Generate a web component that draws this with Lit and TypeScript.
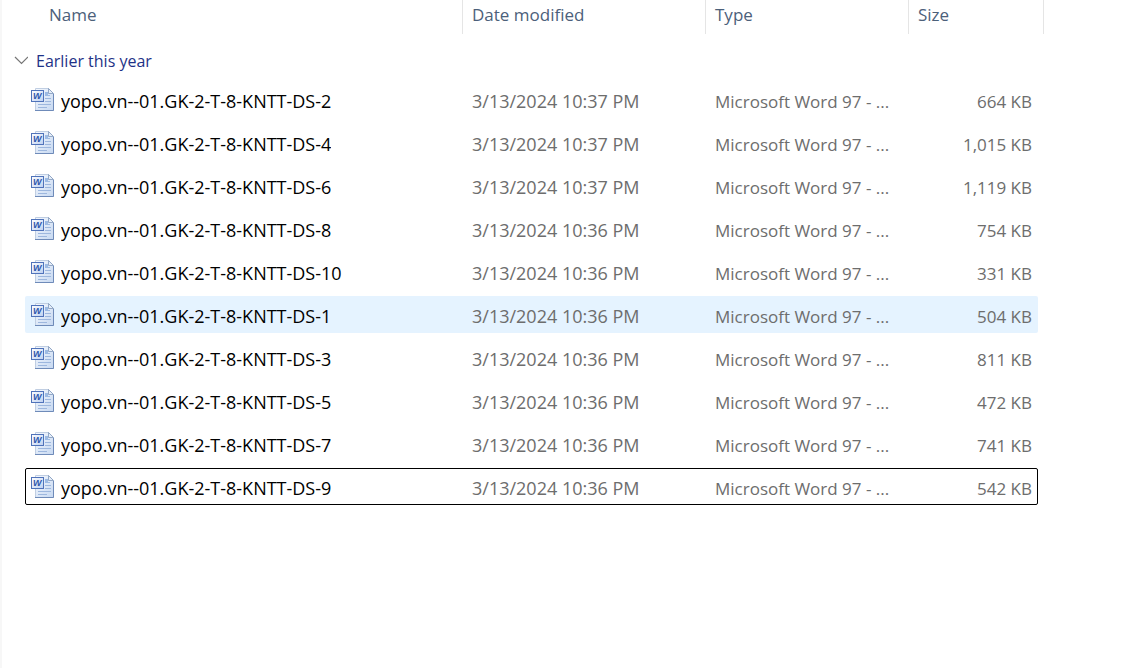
import { LitElement, html, css } from "lit";
import { customElement, state } from "lit/decorators.js";
import { classMap } from "lit/directives/class-map.js";

interface FileRow {
  name: string;
  modified: string;
  size: string;
  state?: "hover" | "focus";
}

const TYPE = "Microsoft Word 97 - ...";

const FILES: FileRow[] = [
  { name: "yopo.vn--01.GK-2-T-8-KNTT-DS-2", modified: "3/13/2024 10:37 PM", size: "664 KB" },
  { name: "yopo.vn--01.GK-2-T-8-KNTT-DS-4", modified: "3/13/2024 10:37 PM", size: "1,015 KB" },
  { name: "yopo.vn--01.GK-2-T-8-KNTT-DS-6", modified: "3/13/2024 10:37 PM", size: "1,119 KB" },
  { name: "yopo.vn--01.GK-2-T-8-KNTT-DS-8", modified: "3/13/2024 10:36 PM", size: "754 KB" },
  { name: "yopo.vn--01.GK-2-T-8-KNTT-DS-10", modified: "3/13/2024 10:36 PM", size: "331 KB" },
  { name: "yopo.vn--01.GK-2-T-8-KNTT-DS-1", modified: "3/13/2024 10:36 PM", size: "504 KB", state: "hover" },
  { name: "yopo.vn--01.GK-2-T-8-KNTT-DS-3", modified: "3/13/2024 10:36 PM", size: "811 KB" },
  { name: "yopo.vn--01.GK-2-T-8-KNTT-DS-5", modified: "3/13/2024 10:36 PM", size: "472 KB" },
  { name: "yopo.vn--01.GK-2-T-8-KNTT-DS-7", modified: "3/13/2024 10:36 PM", size: "741 KB" },
  { name: "yopo.vn--01.GK-2-T-8-KNTT-DS-9", modified: "3/13/2024 10:36 PM", size: "542 KB", state: "focus" },
];

@customElement("word-icon")
class WordIcon extends LitElement {
  static styles = css`
    :host { display: block; flex: none; width: 24px; height: 24px; }
    svg { display: block; }
    .letter { font: italic bold 9px "Liberation Sans", sans-serif; fill: #2f57ac; }
  `;

  render() {
    return html`
      <svg width="24" height="24" viewBox="0 0 24 24" aria-hidden="true">
        <defs>
          <linearGradient id="sheet" x1="0" y1="0" x2="1" y2="1">
            <stop offset="0" stop-color="#f6f9fe" />
            <stop offset="1" stop-color="#c6d8f1" />
          </linearGradient>
          <linearGradient id="tile" x1="0" y1="0" x2="1" y2="1">
            <stop offset="0" stop-color="#ffffff" />
            <stop offset="1" stop-color="#bdd0f1" />
          </linearGradient>
        </defs>
        <path d="M4.5 .5H17.5L22.5 5.5V22.5H4.5Z" fill="url(#sheet)" stroke="#c0cee2" />
        <path d="M4 22.5H22.5V6" fill="none" stroke="#6f8bb9" />
        <path d="M17.5 .5V5.5H22.5Z" fill="#e6eef8" stroke="#8098bb" stroke-width=".8" />
        <path d="M14 4H17V7H19V8H14Z" fill="#9dbbe4" />
        <path d="M14 10.5H20M14 13.5H20M7 16.5H20M7 19.5H16" stroke="#9db7de" />
        <rect x=".5" y="2.5" width="12" height="11" fill="url(#tile)" stroke="#5073ba" />
        <text class="letter" x="2" y="11">W</text>
      </svg>
    `;
  }
}

@customElement("app-root")
export class AppRoot extends LitElement {
  @state() private open = true;

  static styles = css`
    :host {
      display: block;
      box-sizing: border-box;
      min-height: 100vh;
      border-left: 2px solid #f7f7f7;
      background: #fff;
      font: 17px/24px "Open Sans", "Noto Sans", sans-serif;
      color: #6d6d6d;
    }
    table, thead, tbody { display: block; }
    table { margin-right: 80px; }
    tr { display: grid; grid-template-columns: minmax(0, 1fr) 243px 203px 135px; }
    th, td { padding: 0; font-weight: inherit; text-align: left; white-space: nowrap; }
    button {
      padding: 0;
      border: 0;
      background: none;
      font: inherit;
      color: inherit;
      text-align: left;
    }
    .head { color: #4c607a; }
    .head th {
      box-sizing: border-box;
      height: 34px;
      padding: 3px 9px 7px;
      border-right: 1px solid #e5e5e5;
    }
    .head th:first-child { padding-left: 47px; }
    .head button { display: block; width: 100%; }
    .group { display: block; padding: 15px 0 8px 12px; font-size: 16px; color: #1e3287; }
    .group th { display: block; }
    .toggle { display: flex; align-items: center; gap: 8px; }
    .chevron { display: block; width: 14px; height: 14px; margin-bottom: 2px; }
    .chevron.closed { transform: rotate(-90deg); }
    .file {
      grid-template-columns: minmax(0, 1fr) 243px 203px 128px;
      align-items: center;
      box-sizing: border-box;
      height: 37px;
      margin: 0 6px 6px 23px;
      border: 1px solid transparent;
      border-radius: 2px;
    }
    .file td { padding: 4px 9px 0; }
    .file .date { padding-top: 2px; }
    .file .name {
      display: flex;
      align-items: center;
      gap: 6px;
      padding: 0 0 0 5px;
      color: #000;
    }
    .label { padding-top: 2px; overflow: hidden; text-overflow: ellipsis; }
    .label, .date { font-size: 18px; }
    .file .size { padding-right: 5px; text-align: right; }
    .hover { background: #e5f3ff; }
    .focus { border-color: #000; }
  `;

  render() {
    return html`
      <table>
        <thead>
          <tr class="head">
            ${["Name", "Date modified", "Type", "Size"].map(
              (title) => html`<th scope="col"><button type="button">${title}</button></th>`
            )}
          </tr>
        </thead>
        <tbody>
          <tr class="group">
            <th scope="rowgroup" colspan="4">
              <button
                class="toggle"
                type="button"
                aria-expanded=${this.open ? "true" : "false"}
                @click=${() => (this.open = !this.open)}
              >
                <svg class=${classMap({ chevron: true, closed: !this.open })} viewBox="0 0 14 14" aria-hidden="true">
                  <path d="M1 4L7.5 10.5L14 4" fill="none" stroke="#767676" stroke-width="1.2" />
                </svg>
                Earlier this year
              </button>
            </th>
          </tr>
          ${this.open ? FILES.map((file) => this.renderFile(file)) : ""}
        </tbody>
      </table>
    `;
  }

  private renderFile(file: FileRow) {
    const classes = { file: true, hover: file.state === "hover", focus: file.state === "focus" };
    return html`
      <tr class=${classMap(classes)}>
        <td class="name"><word-icon></word-icon><span class="label">${file.name}</span></td>
        <td class="date">${file.modified}</td>
        <td>${TYPE}</td>
        <td class="size">${file.size}</td>
      </tr>
    `;
  }
}
